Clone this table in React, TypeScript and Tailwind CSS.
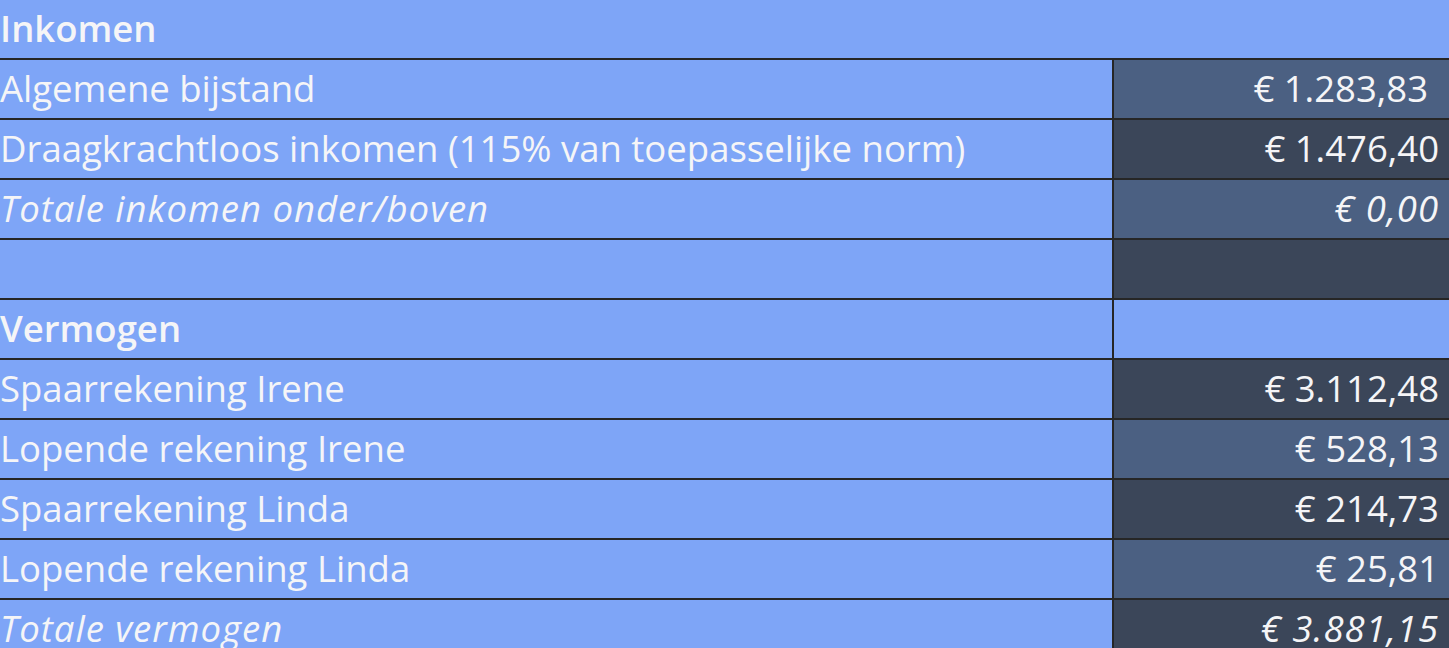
import React from "react";

type Row = {
  label: string;
  value?: string;
  kind: "head" | "normal" | "italic";
  cell: "none" | "blue" | "mid" | "dark";
  extraPad?: boolean;
};

const rows: Row[] = [
  { label: "Inkomen", kind: "head", cell: "none" },
  { label: "Algemene bijstand", value: "€ 1.283,83", kind: "normal", cell: "mid", extraPad: true },
  { label: "Draagkrachtloos inkomen (115% van toepasselijke norm)", value: "€ 1.476,40", kind: "normal", cell: "dark" },
  { label: "Totale inkomen onder/boven", value: "€ 0,00", kind: "italic", cell: "mid" },
  { label: "", value: "", kind: "normal", cell: "dark" },
  { label: "Vermogen", value: "", kind: "head", cell: "blue" },
  { label: "Spaarrekening Irene", value: "€ 3.112,48", kind: "normal", cell: "dark" },
  { label: "Lopende rekening Irene", value: "€ 528,13", kind: "normal", cell: "mid" },
  { label: "Spaarrekening Linda", value: "€ 214,73", kind: "normal", cell: "dark" },
  { label: "Lopende rekening Linda", value: "€ 25,81", kind: "normal", cell: "mid" },
  { label: "Totale vermogen", value: "€ 3.881,15", kind: "italic", cell: "dark" },
];

const cellBg: Record<string, string> = {
  blue: "bg-[#7ea5f7]",
  mid: "bg-[#4b6082]",
  dark: "bg-[#3b4659]",
  none: "",
};

export default function App() {
  return (
    <div
      className="w-[1449px] h-[648px] overflow-hidden bg-[#7ea5f7] text-[#f5f5f7]"
      style={{ fontFamily: '"Open Sans", "Noto Sans", sans-serif' }}
    >
      {rows.map((r, i) => {
        const textCls =
          r.kind === "head"
            ? "font-semibold"
            : r.kind === "italic"
            ? "italic tracking-[1px]"
            : "";
        return (
          <div
            key={i}
            className="flex h-[60px] border-b-2 border-[#262626] text-[36.5px] leading-none"
          >
            <div
              className={`flex items-center ${
                r.cell === "none" ? "flex-1" : "w-[1112px] shrink-0"
              } pb-[2px] ${textCls} whitespace-nowrap`}
            >
              {r.label}
            </div>
            {r.cell !== "none" && (
              <div
                className={`flex-1 flex items-center justify-end border-l-2 border-[#262626] ${
                  cellBg[r.cell]
                } ${r.extraPad ? "pr-[21px]" : "pr-[10px]"} pb-[2px] ${
                  r.kind === "italic" ? "italic tracking-[1px]" : ""
                } whitespace-nowrap`}
              >
                {r.value}
              </div>
            )}
          </div>
        );
      })}
    </div>
  );
}
